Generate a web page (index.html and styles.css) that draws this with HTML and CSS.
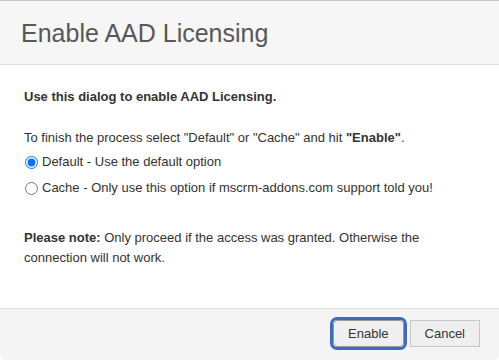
FILE: index.html
```html
<!DOCTYPE html>
<html lang="en">
<head>
    <meta charset="UTF-8">
    <title>Enable AAD Licensing</title>
    <link rel="stylesheet" href="styles.css">
</head>
<body>
    <div class="dialog">
        <div class="dialog-header">
            <h1 class="dialog-title">Enable AAD Licensing</h1>
        </div>
        <div class="dialog-body">
            <p class="intro">Use this dialog to enable AAD Licensing.</p>
            <p class="hint">To finish the process select "Default" or "Cache" and hit <b>"Enable"</b>.</p>
            <label class="option"><input type="radio" name="mode" value="default" checked> Default - Use the default option</label>
            <label class="option"><input type="radio" name="mode" value="cache"> Cache - Only use this option if mscrm-addons.com support told you!</label>
            <p class="note"><b>Please note:</b> Only proceed if the access was granted. Otherwise the connection will not work.</p>
        </div>
        <div class="dialog-footer">
            <button class="btn btn-focus">Enable</button>
            <button class="btn">Cancel</button>
        </div>
    </div>
</body>
</html>
```

FILE: styles.css
```css
body {
    margin: 0;
    font-family: "Liberation Sans", Arial, sans-serif;
    background-color: #fff;
    color: #333;
}
.dialog {
    width: 499px;
    height: 360px;
    border-top: 1px solid #c6c6c6;
    box-sizing: border-box;
    display: flex;
    flex-direction: column;
    overflow: hidden;
}
.dialog-header {
    height: 63px;
    background-color: #f6f6f6;
    border-bottom: 1px solid #dedede;
    display: flex;
    align-items: center;
    padding: 0 21px;
}
.dialog-title {
    margin: 0;
    font-size: 25px;
    font-weight: normal;
    color: #585858;
    padding-top: 2px;
}
.dialog-body {
    height: 243px;
    padding: 22px 24px 0 24px;
    font-size: 13px;
    line-height: 20px;
    box-sizing: border-box;
}
.dialog-body p {
    margin: 0;
}
.intro {
    font-weight: bold;
}
.dialog-body .hint {
    margin-top: 21px;
    margin-bottom: 4px;
}
.option {
    display: flex;
    align-items: center;
    height: 20px;
    margin-bottom: 6px;
    white-space: nowrap;
}
.option input {
    margin: 0 4px 0 1px;
    width: 13px;
    height: 13px;
}
.dialog-body .note {
    margin-top: 30px;
}
.dialog-footer {
    flex: 1;
    background-color: #f4f4f4;
    border-top: 1px solid #dcdcdc;
    border-radius: 0 0 6px 6px;
    display: flex;
    justify-content: flex-end;
    align-items: flex-start;
    gap: 6px;
    padding: 11px 19px 0 0;
}
.btn {
    font-family: "Liberation Sans", Arial, sans-serif;
    font-size: 13px;
    color: #333;
    background-color: #efefef;
    border: 1px solid #c8c8c8;
    height: 27px;
    padding: 0 14px;
    min-width: 68px;
    border-radius: 0;
}
.btn-focus {
    outline: 3px solid #3a6cc2;
    outline-offset: 0;
    border-radius: 4px;
    border-color: #9a9a9a;
}
```
